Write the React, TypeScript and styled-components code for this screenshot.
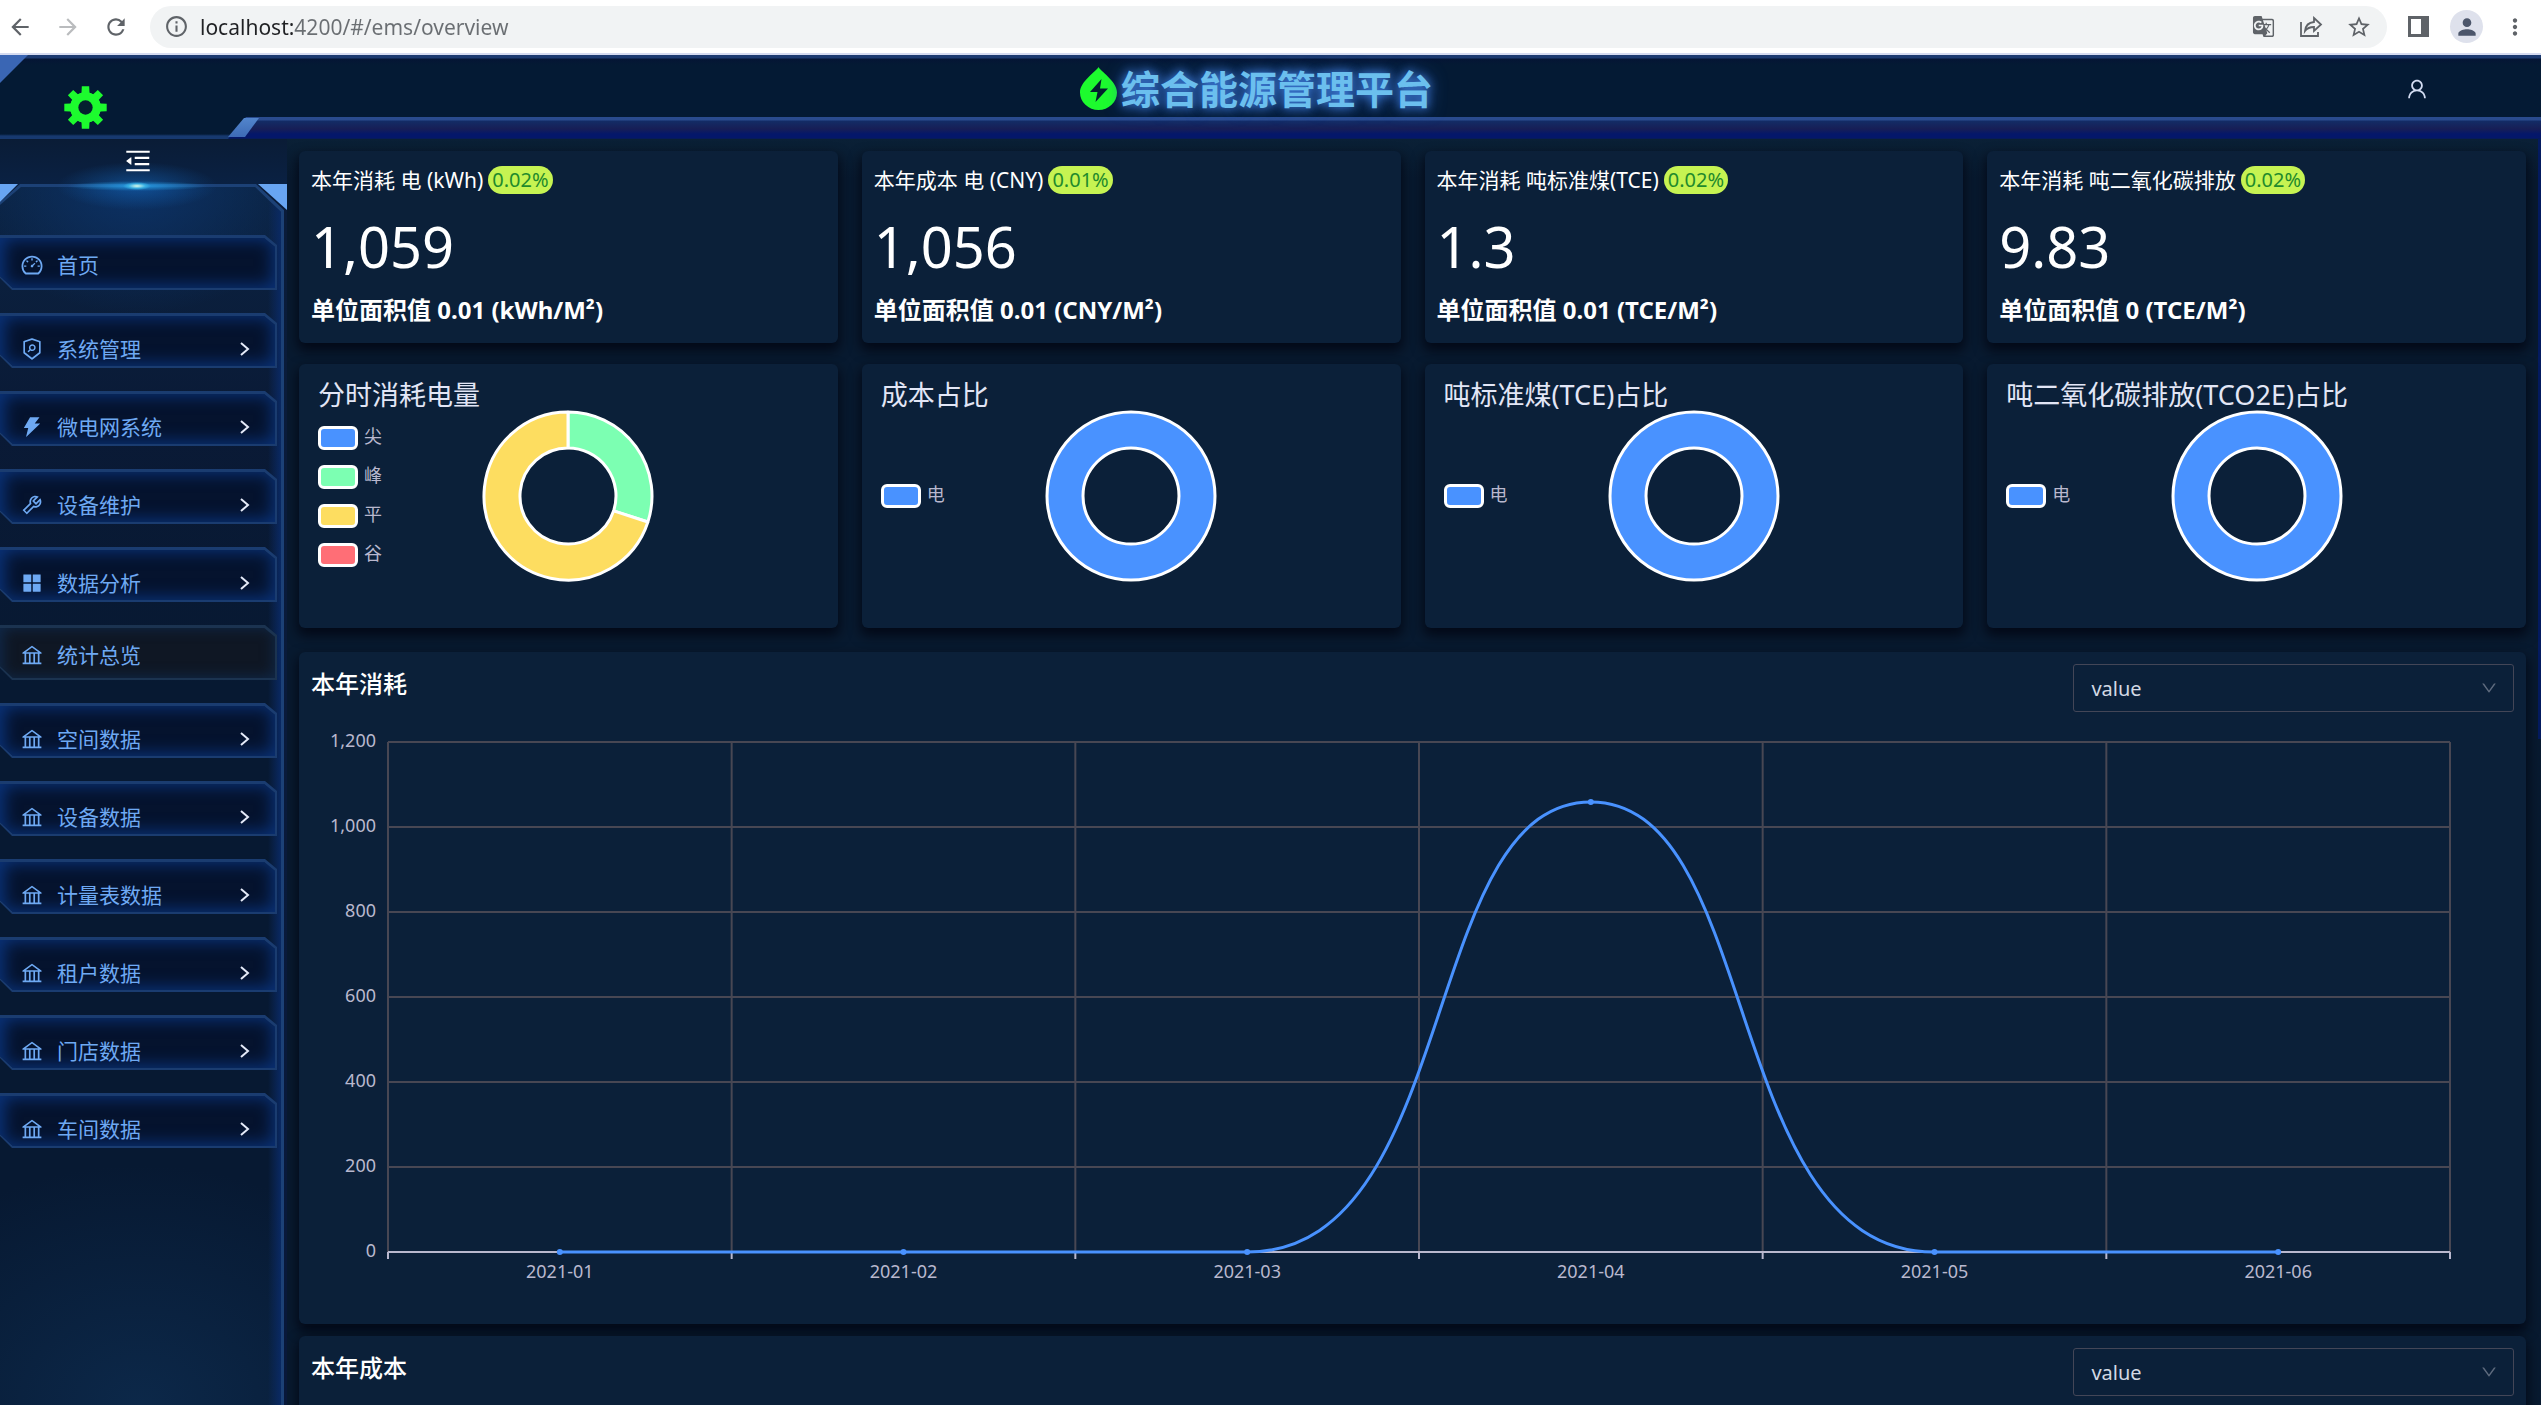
import React, { useLayoutEffect, useRef, useState } from 'react';
import styled, { createGlobalStyle, css } from 'styled-components';
import type { IconType } from 'react-icons';
import {
  AiFillAppstore,
  AiFillThunderbolt,
  AiOutlineBank,
  AiOutlineDashboard,
  AiOutlineDown,
  AiOutlineMenuFold,
  AiOutlineSecurityScan,
  AiOutlineTool,
  AiOutlineUser,
} from 'react-icons/ai';
import {
  MdArrowBack,
  MdArrowForward,
  MdGTranslate,
  MdInfoOutline,
  MdMoreVert,
  MdPerson,
  MdRefresh,
  MdStarOutline,
} from 'react-icons/md';

const GlobalStyle = createGlobalStyle`
  *, *::before, *::after { box-sizing: border-box; }
  body {
    margin: 0;
    overflow: hidden;
    background: #08182c;
    color: #ffffff;
    font-family: "Noto Sans", "Noto Sans CJK SC", sans-serif;
    font-size: 21px;
  }
  button, input, select { font: inherit; color: inherit; }
  h1, h2, p, ul { margin: 0; padding: 0; font-weight: inherit; font-size: inherit; }
`;

const Page = styled.div`
  display: flex;
  flex-direction: column;
  height: 100vh;
  overflow: hidden;
`;

/* ---------- browser bar ---------- */

const BrowserBar = styled.div`
  flex: none;
  display: flex;
  align-items: center;
  height: 55px;
  padding: 0 12px 0 6px;
  background: #ffffff;
  border-bottom: 2px solid #d5dbf0;
  color: #5f6368;
`;

const BarButton = styled.button<{ $faded?: boolean }>`
  display: flex;
  align-items: center;
  justify-content: center;
  width: 28px;
  height: 28px;
  margin-right: 20px;
  padding: 0;
  border: 0;
  background: none;
  color: ${(p) => (p.$faded ? '#babcbe' : '#5f6368')};
  font-size: 26px;
`;

const AddressBox = styled.div`
  flex: 1;
  display: flex;
  align-items: center;
  gap: 11px;
  height: 42px;
  padding: 0 14px;
  border-radius: 21px;
  background: #f1f3f4;
  font-size: 25px;
`;

const AddressInput = styled.input`
  flex: 1;
  min-width: 0;
  padding: 0;
  border: 0;
  outline: 0;
  font-size: 21px;
  line-height: 28px;
  color: transparent;
  background: linear-gradient(to right, #202124 93px, #6a6e72 93px);
  background-clip: text;
  -webkit-background-clip: text;
`;

const BoxButton = styled(BarButton)`
  margin: 0 0 0 9px;
`;

const BarTools = styled.div`
  display: flex;
  align-items: center;
  gap: 18px;
  padding-left: 17px;
`;

const ToolButton = styled(BarButton)`
  margin: 0;
`;

const Avatar = styled(ToolButton)`
  width: 33px;
  height: 33px;
  border-radius: 50%;
  background: #dee1ec;
  color: #4c566b;
`;

/* ---------- header ---------- */

const Header = styled.header`
  flex: none;
  position: relative;
  display: grid;
  grid-template-columns: 1fr auto 1fr;
  height: 84px;
  background: linear-gradient(
    to bottom,
    #04183a 62px,
    #2a4b8e 62px,
    #2a4b8e 65px,
    #132c66 66px,
    #171e56 74px,
    #04176a 79px,
    #04176a 83px,
    #081f4c 84px
  );

  &::before {
    content: '';
    position: absolute;
    inset: 0;
    clip-path: polygon(0 0, 100% 0, 100% 62px, 246px 62px, 228px 84px, 0 84px);
    background: linear-gradient(to bottom, #1c3a70 3px, #051535 4px, #041a34 10px, #041a34 79px, #17396f 81px, #17396f 84px);
  }

  &::after {
    content: '';
    position: absolute;
    left: 228px;
    top: 63px;
    width: 31px;
    height: 19px;
    clip-path: polygon(16px 0, 31px 0, 17px 100%, 0 100%);
    background: linear-gradient(to bottom, #5285cc, #3d6bb6);
  }
`;

const HeaderCorner = styled.div`
  position: absolute;
  left: 0;
  top: 0;
  width: 28px;
  height: 28px;
  clip-path: polygon(0 0, 100% 0, 0 100%);
  background: linear-gradient(135deg, #3a66b4 50%, #062a80 50%);
  background-size: 38px 38px;
`;

const HeaderSide = styled.div<{ $end?: boolean }>`
  position: relative;
  display: flex;
  align-items: flex-start;
  padding: ${(p) => (p.$end ? '22px 112px 0 0' : '31px 0 0 64px')};
  justify-content: ${(p) => (p.$end ? 'flex-end' : 'flex-start')};
`;

const PlainButton = styled.button`
  display: flex;
  padding: 0;
  border: 0;
  background: none;
  color: #d3dcf2;
  font-size: 24px;
`;

const Brand = styled.h1`
  position: relative;
  display: flex;
  align-items: flex-start;
  gap: 4px;
  padding: 6px 28px 0 0;
  font-size: 39px;
  line-height: 56px;
  font-weight: 700;
  color: #6bbfee;
  text-shadow: 0 0 10px #3f7fdc, 0 0 18px #2f66c4;
`;

const DropIcon = styled.svg`
  width: 37px;
  height: 43px;
  margin-top: 6px;
`;

/* ---------- sidebar ---------- */

const Body = styled.div`
  flex: 1;
  min-height: 0;
  display: flex;
`;

const Sidebar = styled.aside`
  position: relative;
  flex: none;
  width: 287px;
  overflow: hidden;
  background: linear-gradient(to bottom, #0a1c36, #0a2143 46px, #0a1c3a 47px, #08183a);
`;

const SidebarFrame = styled.div`
  position: absolute;
  inset: 45px 3px 0 0;
  clip-path: polygon(0 18px, 20px 0, 256px 0, 100% 26px, 100% 100%, 0 100%);
  background: #1c4176;

  &::before {
    content: '';
    position: absolute;
    inset: 0;
    clip-path: polygon(0 21px, 21px 3px, 255px 3px, 281px 28px, 281px 100%, 0 100%);
    background:
      linear-gradient(to right, transparent 268px, #0a2a66 282px),
      radial-gradient(ellipse 170px 130px at 137px 0, #0c3266, transparent),
      radial-gradient(ellipse 300px 240px at 140px 100%, #0c2849, transparent),
      linear-gradient(to bottom, #0b2342, #0a1a36 240px, #071932 500px, #071932);
  }
`;

const SidebarCorner = styled.div<{ $right?: boolean }>`
  position: absolute;
  top: 45px;
  background: #68a5f2;
  ${(p) =>
    p.$right
      ? css`
          right: 0;
          width: 29px;
          height: 26px;
          clip-path: polygon(0 0, 100% 0, 100% 100%);
        `
      : css`
          left: 0;
          width: 18px;
          height: 18px;
          clip-path: polygon(0 0, 100% 0, 0 100%);
        `}
`;

const SidebarGlow = styled.div`
  position: absolute;
  left: 17px;
  top: 17px;
  width: 240px;
  height: 60px;
  background:
    radial-gradient(ellipse 14px 4px at center, #d9fbe9, rgba(64, 190, 235, 0.7) 60%, transparent),
    radial-gradient(ellipse 70px 5px at center, rgba(40, 160, 230, 0.9), transparent),
    radial-gradient(ellipse 80px 24px at center, rgba(20, 110, 200, 0.5), transparent);
`;

const FoldButton = styled(PlainButton)`
  position: relative;
  justify-content: center;
  width: 275px;
  padding-top: 7px;
  color: #ffffff;
  font-size: 30px;
`;

const Menu = styled.ul`
  position: relative;
  display: flex;
  flex-direction: column;
  gap: 23px;
  margin-top: 59px;
  list-style: none;
`;

const MenuButton = styled.button<{ $active?: boolean; $group?: boolean }>`
  position: relative;
  display: flex;
  align-items: center;
  gap: 13px;
  width: 277px;
  height: 55px;
  padding: ${(p) => (p.$group ? '17px 26px 0 20px' : '5px 26px 0 20px')};
  border: 0;
  text-align: left;
  line-height: 30px;
  color: #6ea9f3;
  background: ${(p) => (p.$active ? '#1b3350' : '#1a3c70')};
  clip-path: polygon(0 0, 265px 0, 100% 10px, 100% 100%, 12px 100%, 0 43px);

  &::before {
    content: '';
    position: absolute;
    inset: 0;
    clip-path: polygon(0 3px, 264px 3px, 275px 12px, 275px 53px, 13px 53px, 0 41px);
    background: ${(p) => (p.$active ? '#0f1724' : '#05132e')};
    box-shadow: ${(p) =>
      p.$active ? 'inset 0 0 14px 3px #10294a' : 'inset 0 0 16px 5px #0a3278'};
  }
`;

const MenuIcon = styled.span`
  position: relative;
  display: flex;
  font-size: 24px;
`;

const MenuText = styled.span`
  position: relative;
  flex: 1;
`;

const Chevron = styled.svg`
  position: relative;
  width: 13px;
  height: 16px;
  fill: none;
  stroke: #e4eaf8;
  stroke-width: 2;
`;

/* ---------- content ---------- */

const Main = styled.main`
  flex: 1;
  min-width: 0;
  display: flex;
  flex-direction: column;
  padding: 12px 15px 0 12px;
  overflow: hidden;
  background:
    linear-gradient(to bottom, #041b60, #041b60) right top / 3px 600px no-repeat,
    linear-gradient(to bottom, #0a2036, #081a30 40px, #081a30);
`;

const CardRow = styled.div`
  display: grid;
  grid-template-columns: repeat(4, minmax(0, 1fr));
  gap: 24px;
  margin-bottom: 21px;
`;

const Card = styled.section`
  flex: none;
  border-radius: 6px;
  background: #0b2039;
  box-shadow: 0 6px 12px 2px rgba(0, 2, 10, 0.65);
`;

const StatCard = styled(Card)`
  padding: 15px 12px 18px;
`;

const StatTitle = styled.h2`
  display: flex;
  align-items: center;
  gap: 5px;
  line-height: 28px;
  white-space: nowrap;
`;

const Badge = styled.span`
  padding: 0 4px;
  border-radius: 14px;
  background: #c6f352;
  color: #1f8a2c;
  font-size: 20px;
`;

const StatValue = styled.p`
  margin: 14px 0 10px;
  font-size: 56px;
  line-height: 76px;
`;

const StatUnit = styled.p`
  font-size: 24px;
  line-height: 31px;
  font-weight: 700;
`;

const PieCard = styled(Card)`
  display: grid;
  grid-template-columns: minmax(0, 1fr) auto minmax(0, 1fr);
  align-items: center;
  padding: 14px 19px 48px;
`;

const PieTitle = styled.h2`
  grid-column: 1 / -1;
  font-size: 27px;
  line-height: 34px;
  color: #e2e6f6;
  white-space: nowrap;
`;

const Legend = styled.ul`
  display: flex;
  flex-direction: column;
  gap: 15px;
  list-style: none;
`;

const LegendItem = styled.li<{ $color: string }>`
  display: flex;
  align-items: flex-start;
  gap: 6px;
  height: 24px;
  font-size: 18px;
  line-height: 20px;
  color: #b9b8ce;

  &::before {
    content: '';
    width: 40px;
    height: 24px;
    border: 3px solid #ffffff;
    border-radius: 6px;
    background: ${(p) => p.$color};
  }
`;

const PieSvg = styled.svg`
  display: block;
  width: 168px;
  height: 168px;
  overflow: visible;
  stroke: #ffffff;
  stroke-width: 3;
  stroke-linejoin: bevel;
`;

const ChartCard = styled(Card)`
  padding: 12px;
  margin-top: 3px;

  & + & {
    flex: 1;
    margin-top: 12px;
    border-radius: 6px 6px 0 0;
  }
`;

const ChartHead = styled.div`
  display: flex;
  justify-content: space-between;
  align-items: flex-start;
`;

const ChartTitle = styled.label`
  font-size: 24px;
  line-height: 40px;
  font-weight: 500;
`;

const SelectBox = styled.div`
  position: relative;
  width: 20%;
  color: #5f6b7e;

  svg {
    position: absolute;
    right: 16px;
    top: 15px;
    font-size: 18px;
    pointer-events: none;
  }
`;

const Select = styled.select`
  display: block;
  appearance: none;
  width: 100%;
  height: 48px;
  padding: 0 17px;
  border: 1px solid #434657;
  border-radius: 3px;
  outline: 0;
  background: transparent;
  color: #d3d9e4;
  font-size: 20px;
`;

const PlotSvg = styled.svg`
  display: block;
  width: 100%;
  height: 600px;
  font-size: 18px;
  fill: #b9b8ce;
`;

/* ---------- icons ---------- */

const gearPoints = Array.from({ length: 8 }, (_, i) => {
  const corner = (deg: number, r: number) => {
    const a = ((i * 45 + deg) * Math.PI) / 180;
    return `${(21 + r * Math.sin(a)).toFixed(1)},${(21 - r * Math.cos(a)).toFixed(1)}`;
  };
  return [corner(-15, 15), corner(-10, 21), corner(10, 21), corner(15, 15)].join(' ');
}).join(' ');

const GearIcon = () => (
  <svg width="43" height="43" viewBox="0 0 42 42">
    <polygon points={gearPoints} fill="#1dfb2e" />
    <circle cx="21" cy="21" r="15" fill="#1dfb2e" />
    <circle cx="21" cy="21" r="7" fill="#04202f" />
  </svg>
);

const ShareIcon = () => (
  <svg width="24" height="24" viewBox="0 0 24 24" fill="none" stroke="currentColor" strokeWidth="1.8">
    <path d="M2 7v14h17v-4" />
    <path d="M15 3l7 6.500-7 6.500v-4c-4 0-7 1.200-9 4 .5-5 3.500-8.500 9-9z" />
  </svg>
);

const PanelIcon = () => (
  <svg width="21" height="21" viewBox="0 0 21 21">
    <path fill="currentColor" fillRule="evenodd" d="M0 0h21v21H0zM3 3h10v15H3z" />
  </svg>
);

/* ---------- data ---------- */

type MenuEntry = { text: string; icon: IconType; group?: boolean; active?: boolean };

const menu: MenuEntry[] = [
  { text: '首页', icon: AiOutlineDashboard },
  { text: '系统管理', icon: AiOutlineSecurityScan, group: true },
  { text: '微电网系统', icon: AiFillThunderbolt, group: true },
  { text: '设备维护', icon: AiOutlineTool, group: true },
  { text: '数据分析', icon: AiFillAppstore, group: true },
  { text: '统计总览', icon: AiOutlineBank, active: true },
  { text: '空间数据', icon: AiOutlineBank, group: true },
  { text: '设备数据', icon: AiOutlineBank, group: true },
  { text: '计量表数据', icon: AiOutlineBank, group: true },
  { text: '租户数据', icon: AiOutlineBank, group: true },
  { text: '门店数据', icon: AiOutlineBank, group: true },
  { text: '车间数据', icon: AiOutlineBank, group: true },
];

const stats = [
  { title: '本年消耗 电 (kWh)', rate: '0.02%', value: '1,059', unit: '单位面积值 0.01 (kWh/M²)' },
  { title: '本年成本 电 (CNY)', rate: '0.01%', value: '1,056', unit: '单位面积值 0.01 (CNY/M²)' },
  { title: '本年消耗 吨标准煤(TCE)', rate: '0.02%', value: '1.3', unit: '单位面积值 0.01 (TCE/M²)' },
  { title: '本年消耗 吨二氧化碳排放', rate: '0.02%', value: '9.83', unit: '单位面积值 0 (TCE/M²)' },
];

type Slice = { name: string; color: string; share: number };

const electricity: Slice[] = [{ name: '电', color: '#4992ff', share: 1 }];

const pies: { title: string; slices: Slice[] }[] = [
  {
    title: '分时消耗电量',
    slices: [
      { name: '尖', color: '#4992ff', share: 0 },
      { name: '峰', color: '#7cffb2', share: 0.3 },
      { name: '平', color: '#fddd60', share: 0.7 },
      { name: '谷', color: '#ff6e76', share: 0 },
    ],
  },
  { title: '成本占比', slices: electricity },
  { title: '吨标准煤(TCE)占比', slices: electricity },
  { title: '吨二氧化碳排放(TCO2E)占比', slices: electricity },
];

type Month = { label: string; value: number };

const usage: Month[] = [
  { label: '2021-01', value: 0 },
  { label: '2021-02', value: 0 },
  { label: '2021-03', value: 0 },
  { label: '2021-04', value: 1059 },
  { label: '2021-05', value: 0 },
  { label: '2021-06', value: 0 },
];

/* ---------- charts ---------- */

const R_OUT = 84;
const R_IN = 48;

const polar = (turn: number, r: number) => {
  const a = turn * Math.PI * 2;
  return `${84 + r * Math.sin(a)} ${84 - r * Math.cos(a)}`;
};

const slicePath = (from: number, to: number) => {
  const large = to - from > 0.5 ? 1 : 0;
  return `M${polar(from, R_OUT)}A${R_OUT} ${R_OUT} 0 ${large} 1 ${polar(to, R_OUT)}L${polar(to, R_IN)}A${R_IN} ${R_IN} 0 ${large} 0 ${polar(from, R_IN)}Z`;
};

function Pie({ slices }: { slices: Slice[] }) {
  let turn = 0;
  return (
    <PieSvg viewBox="0 0 168 168">
      {slices.map((s) => {
        const from = turn;
        turn += s.share;
        if (s.share === 0) return null;
        if (s.share === 1) {
          return (
            <g key={s.name} fill="none">
              <circle cx="84" cy="84" r={(R_OUT + R_IN) / 2} stroke={s.color} strokeWidth={R_OUT - R_IN} />
              <circle cx="84" cy="84" r={R_OUT} />
              <circle cx="84" cy="84" r={R_IN} />
            </g>
          );
        }
        return <path key={s.name} d={slicePath(from, turn)} fill={s.color} />;
      })}
    </PieSvg>
  );
}

function LinePlot({ months }: { months: Month[] }) {
  const ref = useRef<SVGSVGElement>(null);
  const [width, setWidth] = useState(1200);

  useLayoutEffect(() => {
    const el = ref.current;
    if (!el) return;
    const measure = () => setWidth(el.getBoundingClientRect().width);
    measure();
    const observer = new ResizeObserver(measure);
    observer.observe(el);
    return () => observer.disconnect();
  }, []);

  const left = 77;
  const right = Math.round(width) - 64;
  const top = 30;
  const bottom = 540;
  const step = (right - left) / months.length;
  const yOf = (v: number) => bottom - (v / 1200) * (bottom - top);
  const points = months.map((m, i) => ({ x: left + step * (i + 0.5), y: yOf(m.value) }));

  const d = points.reduce((path, p, i) => {
    if (i === 0) return `M${p.x} ${p.y}`;
    const q = points[i - 1];
    const soft = 0.62;
    const out = q.y > p.y ? soft : 0.5;
    const back = p.y > q.y ? soft : 0.5;
    return `${path}C${q.x + step * out} ${q.y} ${p.x - step * back} ${p.y} ${p.x} ${p.y}`;
  }, '');

  return (
    <PlotSvg ref={ref}>
      <g stroke="#484753" strokeWidth="2">
        {[200, 400, 600, 800, 1000, 1200].map((v) => (
          <line key={v} x1={left} x2={right} y1={yOf(v)} y2={yOf(v)} />
        ))}
        {Array.from({ length: 7 }, (_, i) => (
          <line key={i} x1={left + step * i} x2={left + step * i} y1={top} y2={bottom} />
        ))}
      </g>
      <g stroke="#b9b8ce" strokeWidth="2">
        <line x1={left} x2={right} y1={bottom} y2={bottom} />
        {Array.from({ length: 7 }, (_, i) => (
          <line key={i} x1={left + step * i} x2={left + step * i} y1={bottom} y2={bottom + 7} />
        ))}
      </g>
      {[0, 200, 400, 600, 800, 1000, 1200].map((v) => (
        <text key={v} x={left - 12} y={yOf(v) + 5} textAnchor="end">
          {v.toLocaleString('en-US')}
        </text>
      ))}
      {months.map((m, i) => (
        <text key={m.label} x={points[i].x} y={bottom + 26} textAnchor="middle">
          {m.label}
        </text>
      ))}
      <path d={d} fill="none" stroke="#4992ff" strokeWidth="3" />
      {points.map((p) => (
        <circle key={p.x} cx={p.x} cy={p.y} r="3" fill="#4992ff" />
      ))}
    </PlotSvg>
  );
}

function ChartPanel({ id, title, months }: { id: string; title: string; months?: Month[] }) {
  return (
    <ChartCard>
      <ChartHead>
        <ChartTitle htmlFor={id}>{title}</ChartTitle>
        <SelectBox>
          <Select id={id} defaultValue="value">
            <option value="value">value</option>
          </Select>
          <AiOutlineDown />
        </SelectBox>
      </ChartHead>
      {months && <LinePlot months={months} />}
    </ChartCard>
  );
}

export default function App() {
  return (
    <Page>
      <GlobalStyle />
      <BrowserBar>
        <BarButton aria-label="Back"><MdArrowBack /></BarButton>
        <BarButton aria-label="Forward" $faded><MdArrowForward /></BarButton>
        <BarButton aria-label="Reload"><MdRefresh /></BarButton>
        <AddressBox>
          <MdInfoOutline />
          <AddressInput aria-label="Address" defaultValue="localhost:4200/#/ems/overview" />
          <BoxButton aria-label="Translate"><MdGTranslate size={23} /></BoxButton>
          <BoxButton aria-label="Share"><ShareIcon /></BoxButton>
          <BoxButton aria-label="Bookmark"><MdStarOutline /></BoxButton>
        </AddressBox>
        <BarTools>
          <ToolButton aria-label="Side panel"><PanelIcon /></ToolButton>
          <Avatar aria-label="Profile"><MdPerson /></Avatar>
          <ToolButton aria-label="More"><MdMoreVert /></ToolButton>
        </BarTools>
      </BrowserBar>

      <Header>
        <HeaderCorner />
        <HeaderSide>
          <PlainButton aria-label="Settings"><GearIcon /></PlainButton>
        </HeaderSide>
        <Brand>
          <DropIcon viewBox="0 0 37 43">
            <path fill="#1dfb2e" d="M18.500 0C20 4 37 14 37 25.500a18.500 17.500 0 0 1-37 0C0 14 17 4 18.500 0z" />
            <path fill="#04202f" d="M21.500 12L10 25h7.500l-2 10L28 21.500h-8z" />
          </DropIcon>
          综合能源管理平台
        </Brand>
        <HeaderSide $end>
          <PlainButton aria-label="User"><AiOutlineUser /></PlainButton>
        </HeaderSide>
      </Header>

      <Body>
        <Sidebar>
          <SidebarFrame />
          <SidebarCorner />
          <SidebarCorner $right />
          <SidebarGlow />
          <FoldButton aria-label="Collapse menu"><AiOutlineMenuFold /></FoldButton>
          <Menu>
            {menu.map(({ text, icon: Icon, group, active }) => (
              <li key={text}>
                <MenuButton $group={group} $active={active}>
                  <MenuIcon><Icon /></MenuIcon>
                  <MenuText>{text}</MenuText>
                  {group && (
                    <Chevron viewBox="0 0 13 16">
                      <path d="M3 2l7 6-7 6" />
                    </Chevron>
                  )}
                </MenuButton>
              </li>
            ))}
          </Menu>
        </Sidebar>

        <Main>
          <CardRow>
            {stats.map((s) => (
              <StatCard key={s.title}>
                <StatTitle>
                  {s.title}
                  <Badge>{s.rate}</Badge>
                </StatTitle>
                <StatValue>{s.value}</StatValue>
                <StatUnit>{s.unit}</StatUnit>
              </StatCard>
            ))}
          </CardRow>
          <CardRow>
            {pies.map((p) => (
              <PieCard key={p.title}>
                <PieTitle>{p.title}</PieTitle>
                <Legend>
                  {p.slices.map((s) => (
                    <LegendItem key={s.name} $color={s.color}>{s.name}</LegendItem>
                  ))}
                </Legend>
                <Pie slices={p.slices} />
              </PieCard>
            ))}
          </CardRow>
          <ChartPanel id="usage-mode" title="本年消耗" months={usage} />
          <ChartPanel id="cost-mode" title="本年成本" />
        </Main>
      </Body>
    </Page>
  );
}
